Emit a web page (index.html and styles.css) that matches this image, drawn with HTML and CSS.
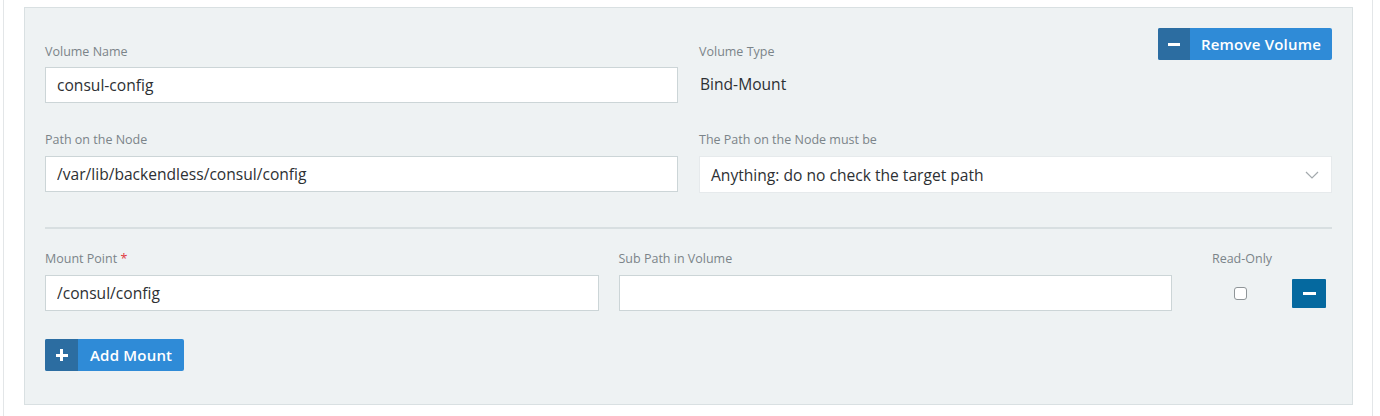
FILE: index.html
```html
<!DOCTYPE html>
<html>
<head>
<meta charset="utf-8">
<link rel="stylesheet" href="styles.css">
</head>
<body>
<div class="page">
  <div class="panel">
    <div class="vol-grid">
      <label class="label label-bottom">Volume Name</label>
      <div class="head">
        <label class="label">Volume Type</label>
        <button class="btn btn-wide"><span class="btn-icon"><span class="minus"></span></span><span class="btn-text">Remove Volume</span></button>
      </div>
      <input class="input" type="text" value="consul-config">
      <div class="value">Bind-Mount</div>

      <label class="label label-row2">Path on the Node</label>
      <label class="label label-row2">The Path on the Node must be</label>
      <input class="input" type="text" value="/var/lib/backendless/consul/config">
      <div class="select">
        <span>Anything: do no check the target path</span>
        <svg class="chev" width="14" height="8" viewBox="0 0 14 8"><path d="M1 1 L7 7 L13 1" fill="none" stroke="#a3a9ad" stroke-width="1.2"/></svg>
      </div>
    </div>

    <div class="sep"></div>

    <div class="mount-grid">
      <label class="label">Mount Point <span class="req">*</span></label>
      <label class="label">Sub Path in Volume</label>
      <div class="ro-head"><label class="label ro-label">Read-Only</label></div>
      <input class="input" type="text" value="/consul/config">
      <input class="input" type="text" value="">
      <div class="ro-cell">
        <div class="ro-box"><span class="checkbox"></span></div>
        <button class="btn-sq"><span class="minus"></span></button>
      </div>
    </div>

    <div class="actions">
      <button class="btn"><span class="btn-icon btn-icon-add"><span class="plus"></span></span><span class="btn-text btn-text-add">Add Mount</span></button>
    </div>
  </div>
</div>
</body>
</html>
```

FILE: styles.css
```css
* { box-sizing: border-box; }
html, body { margin: 0; padding: 0; background: #fff; }
body {
  font-family: "Open Sans", Lato, "Liberation Sans", sans-serif;
  color: #2d3033;
  height: 416px;
  overflow: hidden;
}
.page {
  margin-left: 3px;
  width: 1370px;
  height: 416px;
  border-left: 1px solid #e3e6e8;
  border-right: 1px solid #e3e6e8;
  padding: 7px 19px 0 20px;
}
.panel {
  background: #eef2f3;
  border: 1px solid #d9e0e2;
  padding: 20px 20px 33px 20px;
}
.vol-grid {
  display: grid;
  grid-template-columns: 1fr 1fr;
  column-gap: 21px;
}
.label {
  display: block;
  font-size: 12.5px;
  line-height: 16px;
  color: #7b8489;
}
.label-bottom { align-self: end; margin-bottom: 7px; }
.head {
  display: flex;
  align-items: flex-end;
  justify-content: space-between;
  margin-bottom: 7px;
}
.label-row2 { margin-top: 29px; margin-bottom: 8px; }
.input {
  display: block;
  width: 100%;
  height: 36px;
  border: 1px solid #ccd5d7;
  background: #fff;
  padding: 0 11px;
  font-family: inherit;
  font-size: 15.6px;
  color: #2d3033;
  outline: none;
  border-radius: 0;
}
.value {
  display: flex;
  align-items: center;
  font-size: 15.6px;
  padding-left: 1px;
  padding-bottom: 2px;
}
.select {
  height: 37px;
  background: #fff;
  border: 1px solid #e6eaec;
  display: flex;
  align-items: center;
  justify-content: space-between;
  padding: 0 12px 0 11px;
  font-size: 15.6px;
  color: #2d3033;
}
.chev { display: block; margin-top: 1px; }
.sep {
  height: 2px;
  background: #d8dfe1;
  margin: 34px 0 22px;
}
.mount-grid {
  display: grid;
  grid-template-columns: 1fr 1fr 140px;
  column-gap: 20px;
}
.mount-grid > .label { margin-bottom: 8px; }
.req { color: #e0393e; }
.ro-head { display: flex; }
.ro-label { width: 100px; text-align: center; margin-bottom: 8px; }
.ro-cell { display: flex; align-items: center; }
.ro-box { width: 100px; display: flex; justify-content: center; }
.checkbox {
  width: 13px;
  height: 13px;
  border: 1px solid #8f9598;
  border-radius: 3px;
  background: #fff;
  margin-left: -3px;
}
.btn-sq {
  width: 34px;
  height: 29px;
  background: #05699f;
  border: 0;
  border-radius: 1px;
  display: flex;
  align-items: center;
  justify-content: center;
  padding: 0;
}
.btn-sq .minus { width: 13px; }
.actions { margin-top: 28px; display: flex; }
.btn {
  display: inline-flex;
  align-items: stretch;
  height: 32px;
  border: 0;
  padding: 0;
  background: #2f8bd7;
  border-radius: 2px;
  overflow: hidden;
  font-family: inherit;
  cursor: pointer;
}
.btn-icon {
  width: 32px;
  background: #2c6da1;
  display: flex;
  align-items: center;
  justify-content: center;
}
.btn-icon-add { width: 33px; }
.btn-text {
  display: flex;
  align-items: center;
  padding: 0 11px;
  color: #fff;
  font-size: 15px;
  font-weight: 600;
  letter-spacing: 0.2px;
}
.btn-text-add { padding: 0 12px; }
.minus {
  display: block;
  width: 12px;
  height: 3px;
  background: #fff;
}
.plus {
  position: relative;
  display: block;
  width: 12px;
  height: 12px;
}
.plus::before, .plus::after {
  content: "";
  position: absolute;
  background: #fff;
}
.plus::before { left: 0; top: 4.5px; width: 12px; height: 3px; }
.plus::after { left: 4.5px; top: 0; width: 3px; height: 12px; }
```
